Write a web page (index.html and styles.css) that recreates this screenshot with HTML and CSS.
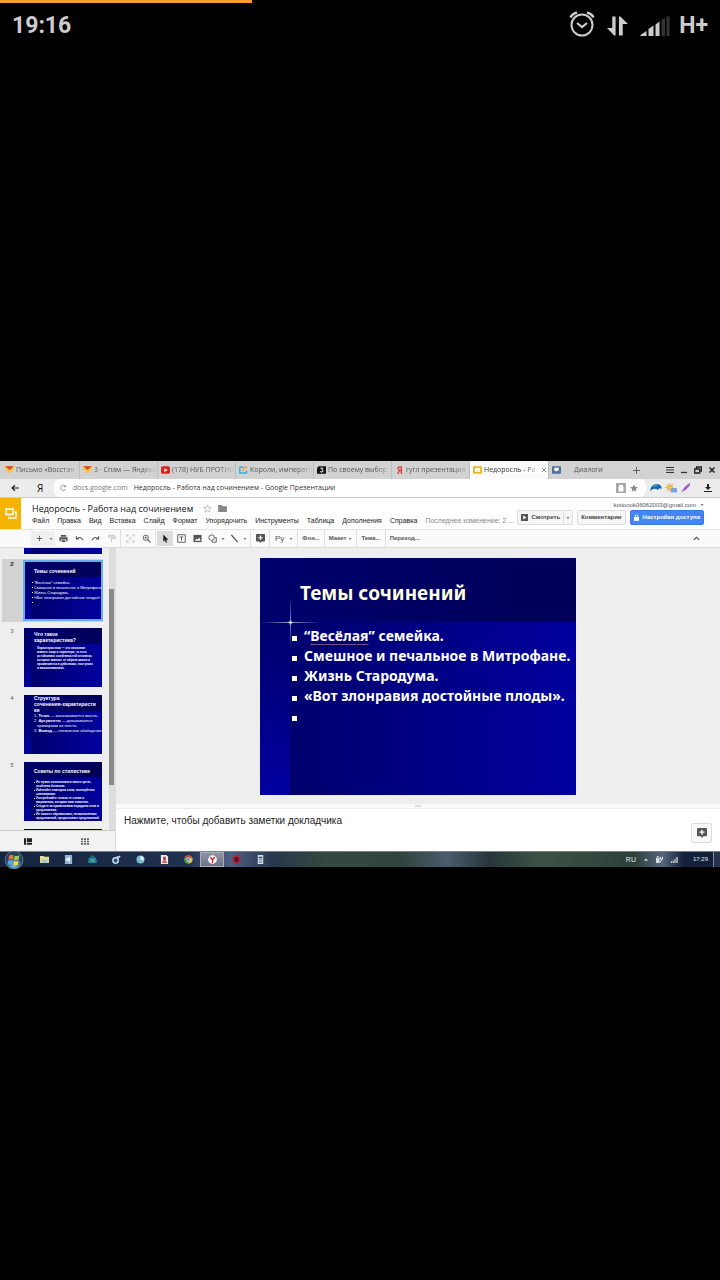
FILE: index.html
```html
<!DOCTYPE html>
<html lang="ru">
<head>
<meta charset="utf-8">
<meta name="viewport" content="width=device-width, initial-scale=1">
<title>Недоросль - Работа над сочинением</title>
<link rel="stylesheet" href="styles.css">
</head>
<body>
<svg class="defs" aria-hidden="true">
  <symbol id="i-mail" viewBox="0 0 12 10"><path fill="#f8c63d" d="M0 0h12v4L6 10 0 4z"/><path fill="#d9432f" d="M0 0h12L6 5z"/></symbol>
  <symbol id="i-caret" viewBox="0 0 6 4"><path fill="currentColor" d="M0 0h6L3 4z"/></symbol>
  <symbol id="i-comment" viewBox="0 0 12 12"><path fill="currentColor" d="M1 0h10q1 0 1 1v8q0 1-1 1H7.500L6 12 4.500 10H1Q0 10 0 9V1Q0 0 1 0z"/><path stroke="#fff" stroke-width="1.600" d="M6 2v6M3 5h6"/></symbol>
  <symbol id="i-signal" viewBox="0 0 29 20"><path fill="#ccc" d="M0 20v-1l6-4v5zM8 13l5-3.500V20H8zM15 8.500 19 5.500v14.500h-4z"/><path fill="#333" d="M21 4 24.500 2v18H21zM26 1 29 0v20h-3z"/></symbol>
</svg>

<div class="progress"><div class="progress-value"></div></div>
<header class="status">
  <time>19:16</time>
  <div class="status-icons">
    <svg class="alarm" viewBox="0 0 26 26" fill="none" stroke="#ccc" stroke-width="2"><circle cx="13" cy="14" r="10.500"/><path d="M8 12l5 4 5-4" stroke-width="2.200"/><path d="M1.500 6.500Q3 3 8 1.500M24.500 6.500Q23 3 18 1.500" stroke-width="2.400"/></svg>
    <svg class="transfer" viewBox="0 0 22 20" fill="#ccc"><path d="M5.500 0H9v20H7.500L0 12h5.500zM12.500 0H14l8 8h-5.500v12h-4z"/></svg>
    <svg class="signal"><use href="#i-signal"/></svg>
    <span class="net">H+</span>
  </div>
</header>

<main class="stage">
<section class="screen">
  <nav class="tabs">
    <a class="tab" href="#"><svg class="fav"><use href="#i-mail"/></svg><span>Письмо «Восстан</span></a>
    <a class="tab" href="#"><svg class="fav"><use href="#i-mail"/></svg><span>3 · Спам — Яндекс</span></a>
    <a class="tab" href="#"><svg class="fav" viewBox="0 0 12 10"><rect width="12" height="10" rx="2.500" fill="#d8201c"/><path fill="#fff" d="M4.500 2.500 9 5 4.500 7.500z"/></svg><span>(178) НУБ ПРОТИВ</span></a>
    <a class="tab" href="#"><svg class="fav" viewBox="0 0 12 10" fill="none"><path stroke="#35aee0" stroke-width="2" d="M6 1H2Q1 1 1 3v6h9V6"/><path stroke="#f29a2e" stroke-width="2" d="M5 6Q6 1 11 1.500"/></svg><span>Короли, императо</span></a>
    <a class="tab" href="#"><svg class="fav" viewBox="0 0 12 10"><path fill="#111" d="M2 0h10v10H0V3z"/><path fill="none" stroke="#fff" stroke-width="1.300" d="M4.500 2.500h3.500L6.500 4.500Q8.500 5 8 7 6 8.500 4 7"/></svg><span>По своему выбор</span></a>
    <a class="tab" href="#"><svg class="fav" viewBox="0 0 12 10"><path fill="none" stroke="#df3a32" stroke-width="1.800" d="M8.500 10V.800H6.500Q3.500 1 4 3.500 4.500 5.500 8 5.500M6 5.500 3.500 10"/></svg><span>гугл презентация -</span></a>
    <a class="tab active" href="#"><svg class="fav" viewBox="0 0 12 10"><rect width="12" height="10" rx="1.500" fill="#f2b51d"/><path fill="#fff" d="M2.500 2.500h7v5h-7z"/></svg><span>Недоросль - Ра</span><svg class="close" viewBox="0 0 6 6"><path stroke="#888" d="M1 1l4 4M5 1 1 5"/></svg></a>
    <a class="tab dialogs" href="#"><svg class="fav" viewBox="0 0 12 10"><rect width="12" height="10" rx="1" fill="#48709b"/><path fill="#fff" d="M3 2h6v4H6.500L5 8V6H3z"/></svg><span>Диалоги</span></a>
    <button class="new-tab" aria-label="Новая вкладка"><svg viewBox="0 0 8 8"><path stroke="#555" d="M4 0v8M0 4h8"/></svg></button>
    <div class="window-controls">
      <button aria-label="Меню"><svg viewBox="0 0 8 8"><path stroke="#333" stroke-width="1.200" d="M0 1.500h8M0 4h8M0 6.500h8"/></svg></button>
      <button aria-label="Свернуть"><svg viewBox="0 0 8 8"><path stroke="#333" stroke-width="1.300" d="M1 6.500h6"/></svg></button>
      <button aria-label="Окно"><svg viewBox="0 0 8 8" fill="none" stroke="#222" stroke-width="1.300"><path d="M2.500 2.500V1h5v4H6M.700 3h5v4h-5z"/></svg></button>
      <button aria-label="Закрыть"><svg viewBox="0 0 8 8"><path stroke="#222" stroke-width="1.500" d="M1.500 1.500l5 5M6.500 1.500l-5 5"/></svg></button>
    </div>
  </nav>

  <div class="address">
    <div class="nav-left">
      <button aria-label="Назад"><svg viewBox="0 0 8 8"><path fill="none" stroke="#222" stroke-width="1.200" d="M8 4H1M4 1.200 1 4l3 2.800"/></svg></button>
      <button class="ya">Я</button>
    </div>
    <div class="url">
      <button aria-label="Обновить"><svg viewBox="0 0 8 8"><path fill="none" stroke="#999" d="M6.500 2.500A2.600 2.600 0 1 0 6.600 5M6.800.800v2H4.500"/></svg></button>
      <span class="host">docs.google.com</span>
      <span>Недоросль - Работа над сочинением - Google Презентации</span>
      <span class="url-tools">
        <svg class="lock-box" viewBox="0 0 10 10"><path fill="#aaa" d="M0 0h10v10H0z"/><path fill="#fff" d="M3 4V2h4v2h.500v4.500h-5V4z"/></svg>
        <svg class="star" viewBox="0 0 10 10"><path fill="#888" d="M5 .500 6.400 3.700 10 4 7.200 6.300 8.100 9.800 5 7.900 1.900 9.800 2.800 6.300 0 4l3.600-.300z"/></svg>
      </span>
    </div>
    <div class="extensions">
      <svg viewBox="0 0 12 10"><path fill="#1565a8" d="M0 8Q1 1 7 1q4 0 5 5-3-2-4 1Q4 4 0 8z"/><path fill="#38a0dc" d="M2 4Q4 1 7 1l1 2z"/></svg>
      <svg viewBox="0 0 12 10"><circle cx="5" cy="4.500" r="2.500" fill="#f6c744" stroke="#e29b34"/><path stroke="#e29b34" d="M5 0v1M5 8v1M0 4.500h1.500M1.500 1l1 1M1.500 8l1-1M8.500 1l-1 1"/><path fill="#7aa7e0" d="M6 5h6v4.500H6z"/></svg>
      <svg viewBox="0 0 12 10"><path fill="#a558c4" d="M1 10Q4 3 10 0q1 3-6 8H3z"/></svg>
      <button aria-label="Загрузки"><svg viewBox="0 0 8 8"><path fill="#222" d="M3 0h2v3h2L4 6 1 3h2zM0 7h8v1H0z"/></svg></button>
    </div>
  </div>

  <div class="doc-header">
    <a class="logo" href="#" aria-label="Презентации"><svg viewBox="0 0 12 12" fill="none" stroke="#fff" stroke-width="1.500"><path d="M1 1h7v5.500H1z"/><path d="M4 8.500V10h7V4H9.500"/></svg></a>
    <div class="doc-info">
      <div class="title-row">
        <h1>Недоросль - Работа над сочинением</h1>
        <svg class="fav-star" viewBox="0 0 10 10"><path fill="none" stroke="#bbb" d="M5 1 6.200 3.900 9.300 4 6.900 6 7.700 9 5 7.300 2.300 9 3.100 6 .700 4l3.100-.100z"/></svg>
        <svg class="folder" viewBox="0 0 10 8"><path fill="#888" d="M0 0h4l1 1.300h5V8H0z"/></svg>
      </div>
      <nav class="menu">
        <a href="#">Файл</a><a href="#">Правка</a><a href="#">Вид</a><a href="#">Вставка</a><a href="#">Слайд</a><a href="#">Формат</a><a href="#">Упорядочить</a><a href="#">Инструменты</a><a href="#">Таблица</a><a href="#">Дополнения</a><a href="#">Справка</a><a class="edited" href="#">Последнее изменение: 2 ...</a>
      </nav>
    </div>
    <div class="account">
      <a class="email" href="#">kotionok06062003@gmail.com <svg class="caret"><use href="#i-caret"/></svg></a>
      <div class="actions">
        <div class="split">
          <button><svg class="play" viewBox="0 0 8 8"><path fill="#555" d="M0 0h8v8H0z"/><path fill="#fff" d="M2.500 1.800 6.300 4 2.500 6.200z"/></svg>Смотреть</button><button class="drop" aria-label="Ещё"><svg class="caret"><use href="#i-caret"/></svg></button>
        </div>
        <button class="comments">Комментарии</button>
        <button class="share"><svg class="lock" viewBox="0 0 6 8"><path fill="none" stroke="#fff" d="M1.500 4V2.200a1.500 1.500 0 0 1 3 0V4"/><path fill="#fff" d="M0 3.500h6V8H0z"/></svg>Настройки доступа</button>
      </div>
    </div>
  </div>

  <div class="toolbar">
    <div class="group">
      <button class="tool shade" aria-label="Новый слайд"><svg viewBox="0 0 10 10"><path stroke="#555" d="M5 2v6M2 5h6"/></svg></button>
      <button class="tool drop-tool shade" aria-label="Макет слайда"><svg class="caret"><use href="#i-caret"/></svg></button>
      <button class="tool" aria-label="Печать"><svg viewBox="0 0 10 10"><path fill="#555" d="M2 1h6v2H2zM.500 3.500h9V8H8V6H2v2H.500z"/><path fill="#555" d="M3 6.800h4V9H3z"/></svg></button>
      <button class="tool" aria-label="Отменить"><svg viewBox="0 0 10 10"><path fill="none" stroke="#555" stroke-width="1.200" d="M1.500 2.500v3h3M1.500 5.500Q6 1.500 9 7"/></svg></button>
      <button class="tool" aria-label="Повторить"><svg viewBox="0 0 10 10"><path fill="none" stroke="#555" stroke-width="1.200" d="M8.500 2.500v3h-3M8.500 5.500Q4 1.500 1 7"/></svg></button>
      <button class="tool" aria-label="Копировать формат"><svg viewBox="0 0 10 10"><path fill="none" stroke="#ccc" stroke-width="1.200" d="M2 1.500h5.500v2H2zM7.500 2.500H9v2.500H5V9"/></svg></button>
    </div>
    <div class="group">
      <button class="tool" aria-label="По размеру"><svg viewBox="0 0 10 10"><path fill="none" stroke="#bbb" d="M1 3V1h2M7 1h2v2M9 7v2H7M3 9H1V7M3.500 3.500 5 5l1.500-1.500M3.500 6.500 5 5l1.500 1.500"/></svg></button>
      <button class="tool" aria-label="Масштаб"><svg viewBox="0 0 10 10"><g fill="none" stroke="#555"><circle cx="4.200" cy="4.200" r="2.900"/><path stroke-width="1.300" d="M6.300 6.300 9.300 9.300"/><path stroke-width=".8" d="M4.200 2.800v2.800M2.800 4.200h2.800"/></g></svg></button>
    </div>
    <div class="group">
      <button class="tool picked" aria-label="Выбрать"><svg viewBox="0 0 10 10"><path fill="#222" d="M2.500.500v8L4.300 7l1.200 2.700 1.400-.600L5.700 6.400h2.600z"/></svg></button>
      <button class="tool" aria-label="Текстовое поле"><svg viewBox="0 0 10 10"><path fill="none" stroke="#555" d="M.800.800h8.400v8.400H.800zM3 3.300h4M5 3.300V7.500"/></svg></button>
      <button class="tool" aria-label="Изображение"><svg viewBox="0 0 10 10"><path fill="#555" d="M.500 1h9v8h-9z"/><path fill="#fff" d="M2 7.500 4 5l1.200 1.300L7 4l1.500 3.500z"/></svg></button>
      <button class="tool tight" aria-label="Фигура"><svg viewBox="0 0 10 10"><g fill="none" stroke="#555"><circle cx="4" cy="4" r="3"/><path d="M7.500 4h1.700v5H4.500V7.500"/></g></svg></button>
      <button class="tool drop-tool" aria-label="Фигуры"><svg class="caret"><use href="#i-caret"/></svg></button>
      <button class="tool tight" aria-label="Линия"><svg viewBox="0 0 10 10"><path stroke="#444" stroke-width="1.200" d="M1.500 1l7 8"/></svg></button>
      <button class="tool drop-tool" aria-label="Линии"><svg class="caret"><use href="#i-caret"/></svg></button>
    </div>
    <div class="group"><button class="tool" aria-label="Комментарий"><svg class="note-icon"><use href="#i-comment"/></svg></button></div>
    <div class="group text-group"><button class="input-tool">Ру</button><svg class="caret"><use href="#i-caret"/></svg></div>
    <div class="group text-group"><button>Фон...</button></div>
    <div class="group text-group"><button>Макет</button><svg class="caret"><use href="#i-caret"/></svg></div>
    <div class="group text-group"><button>Тема...</button></div>
    <div class="text-group"><button>Переход...</button></div>
    <button class="tool collapse" aria-label="Скрыть меню"><svg viewBox="0 0 10 10"><path fill="none" stroke="#444" stroke-width="1.200" d="M2 6.500 5 3.500l3 3"/></svg></button>
  </div>

  <div class="workspace">
    <aside class="side">
      <div class="strip-row">
        <ol class="strip">
          <li class="peek"><div class="thumb deck"></div></li>
          <li class="selected"><span class="num">2</span><div class="thumb deck"><h3>Темы сочинений</h3><ul class="mini-list"><li>“Весёлая” семейка.</li><li>Смешное и печальное в Митрофане.</li><li>Жизнь Стародума.</li><li>«Вот злонравия достойные плоды».</li><li></li></ul></div></li>
          <li><span class="num">3</span><div class="thumb deck high"><h3>Что такое<br>характеристика?</h3><p class="mini-text"><b>Характеристика</b> — это описание<br>живого лица и характера, то есть<br>устойчивых особенностей человека,<br>которые зависят от образа жизни и<br>проявляются в действиях, поступках<br>и высказываниях.</p></div></li>
          <li><span class="num">4</span><div class="thumb deck high structure"><h3>Структура<br>сочинения-характеристи<br>ки</h3><ol class="mini-steps"><li>1. <b>Тезис</b> — высказывается мысль.</li><li>2. <b>Аргументы</b> — доказывается<br>примерами из текста.</li><li>3. <b>Вывод</b> — логическое обобщение.</li></ol></div></li>
          <li><span class="num">5</span><div class="thumb deck advice"><h3>Советы по стилистике</h3><ul class="mini-list dense"><li>Не нужно использовать много цитат,<br>особенно больших.</li><li>Избегайте повторов слов, пользуйтесь<br>синонимами.</li><li>Употребляйте только те слова и<br>выражения, которые вам понятны.</li><li>Следите за правильным порядком слов в<br>предложении.</li><li>Не пишите обрывочных, незаконченных<br>предложений, придаточных предложений</li></ul></div></li>
          <li><span class="num">6</span><div class="thumb deck"></div></li>
        </ol>
        <div class="scroll"><div class="scroll-thumb"></div></div>
      </div>
      <div class="view-switch">
        <button aria-label="Лента"><svg viewBox="0 0 10 8"><path fill="#222" d="M0 0h2.500v8H0zM3.500 0H10v5H3.500zM3.500 6H10v2H3.500z"/></svg></button>
        <button aria-label="Сетка"><svg viewBox="0 0 10 8"><path fill="#666" d="M0 0h2.600v2H0zM3.700 0h2.600v2H3.700zM7.400 0H10v2H7.400zM0 3h2.600v2H0zM3.700 3h2.600v2H3.700zM7.400 3H10v2H7.400zM0 6h2.600v2H0zM3.700 6h2.600v2H3.700zM7.400 6H10v2H7.400z"/></svg></button>
      </div>
    </aside>
    <div class="editor">
      <div class="canvas">
        <article class="slide deck">
          <span class="flare"></span>
          <h2>Темы сочинений</h2>
          <ul>
            <li>“<span class="spell">Весёлая</span>” семейка.</li>
            <li>Смешное и печальное в Митрофане.</li>
            <li>Жизнь Стародума.</li>
            <li>«Вот злонравия достойные плоды».</li>
            <li></li>
          </ul>
        </article>
      </div>
      <div class="grip"><span></span></div>
      <div class="notes">
        <textarea aria-label="Заметки" placeholder="Нажмите, чтобы добавить заметки докладчика"></textarea>
        <button class="explore" aria-label="Анализ данных"><svg><use href="#i-comment"/></svg></button>
      </div>
    </div>
  </div>

  <footer class="taskbar">
    <button class="orb" aria-label="Пуск"><svg viewBox="0 0 20 18"><defs><radialGradient id="orb" cy=".8"><stop offset="0" stop-color="#6fc6ea"/><stop offset="1" stop-color="#23425f"/></radialGradient></defs><circle cx="10" cy="9" r="9" fill="url(#orb)" stroke="#7f94a8" stroke-width=".6"/><path fill="#f0713b" d="M5 5q2-2 4.500-.700L9 8.500Q7 7.500 4.500 8.700z"/><path fill="#9ccc4b" d="M10.500 4.500q2.500 1.200 5-.200L14.700 8.500q-2.500 1.200-4.700.200z"/><path fill="#57a8e8" d="M4.300 9.700q2.500-1.200 4.500 0l-.500 4q-2-1.200-4.500 0z"/><path fill="#fbd34c" d="M10 10q2.300 1 4.600-.200l-.700 4q-2.400 1.200-4.500.200z"/></svg></button>
    <button aria-label="Проводник"><svg viewBox="0 0 10 10"><path fill="#e9d98c" d="M0 1h4l1 1h5v7H0z"/><path fill="#9cc7cf" d="M2 5h6v4H2z"/></svg></button>
    <button aria-label="Звук"><svg viewBox="0 0 10 10"><path fill="#8fb6dc" d="M1 0h8v10H1z"/><path fill="#fff" d="M2 4h2l2.500-2v6L4 6H2z"/></svg></button>
    <button aria-label="Магазин"><svg viewBox="0 0 10 10"><path fill="#1d83a8" d="M1 3h8l1 6H0z"/><path fill="none" stroke="#36b2cc" d="M3 3q2-4 4 0"/><circle cx="5" cy="6" r="2" fill="#54a766"/></svg></button>
    <button aria-label="Плеер"><svg viewBox="0 0 10 10"><circle cx="4" cy="6" r="3" fill="#1d527e" stroke="#cbe5f3" stroke-width="1.600"/><path stroke="#cbe5f3" stroke-width="1.500" d="M5 2h4M7 3l2-2"/></svg></button>
    <button aria-label="Часы"><svg viewBox="0 0 10 10"><circle cx="5" cy="5" r="4.500" fill="#7fb9d4"/><path fill="#e9f5fa" d="M5 5V1a4 4 0 0 1 3.500 5z"/></svg></button>
    <button aria-label="Яндекс"><svg viewBox="0 0 10 10"><path fill="#efefef" d="M1 0h6l2 2v8H1z"/><path fill="#d2312f" d="M3.500 2h3v4h-3zM2.500 7h5v1.500h-5z"/></svg></button>
    <button aria-label="Chrome"><svg viewBox="0 0 10 10"><circle cx="5" cy="5" r="4.500" fill="#dfc243"/><path fill="#cf4638" d="M1 3a4.500 4.500 0 0 1 8 0L5 5z"/><path fill="#3f9950" d="M1 3a4.500 4.500 0 0 0 4 6.500V5z"/><circle cx="5" cy="5" r="2" fill="#4f8edc" stroke="#fff" stroke-width=".7"/></svg></button>
    <button class="running" aria-label="Яндекс.Браузер"><svg viewBox="0 0 10 10"><circle cx="5" cy="5" r="4.800" fill="#fff"/><path fill="none" stroke="#d8262b" stroke-width="1.600" d="M2.500 2 5 5.500 7.500 2M5 5v4"/></svg></button>
    <button aria-label="Opera"><svg viewBox="0 0 10 10"><ellipse cx="5" cy="5" rx="3.500" ry="4" fill="#4f1830" stroke="#c3202f" stroke-width="2"/></svg></button>
    <button aria-label="Калькулятор"><svg viewBox="0 0 10 10"><path fill="#d9e2ec" d="M2 0h6v10H2z"/><path fill="#34445c" d="M3 2h4v1.500H3zM3 5h4v.800H3zM3 7.500h4v.800H3z"/></svg></button>
    <div class="tray">
      <span class="lang">RU</span>
      <svg class="tray-up" viewBox="0 0 6 4"><path fill="#ddd" d="M0 4h6L3 0z"/></svg>
      <svg class="tray-icon" viewBox="0 0 8 8"><path fill="#ddd" d="M0 2h4v6H0zM1 0h2v1.500H1z"/><path fill="none" stroke="#fff" d="M5 1v2.500h2.500V1M6.200 3.500Q6.500 7 4 7"/></svg>
      <svg class="tray-icon" viewBox="0 0 8 8"><path fill="#ddd" d="M0 6h1.200v2H0zM2 5h1.200v3H2zM4 3h1.200v5H4zM6.200 1h1.400v7H6.200z"/></svg>
      <time>17:29</time>
    </div>
    <button class="desktop" aria-label="Показать рабочий стол"></button>
  </footer>
</section>
</main>
</body>
</html>
```

FILE: styles.css
```css
* { box-sizing: border-box; }
body {
  margin: 0;
  min-height: 100vh;
  display: flex;
  flex-direction: column;
  background: #000;
  font-family: "Liberation Sans", Arial, sans-serif;
}
button { margin: 0; padding: 0; border: 0; background: none; font: inherit; color: inherit; display: flex; align-items: center; justify-content: center; }
a { color: inherit; text-decoration: none; }
ul, ol { list-style: none; margin: 0; padding: 0; }
h1, h2, h3, p { margin: 0; }
svg { display: block; flex: none; }
.defs { position: absolute; width: 0; height: 0; }
.caret { width: 4px; height: 2px; color: #777; }

.progress { height: 3px; }
.progress-value { width: 35%; height: 3px; background: #f89d27; }
.status {
  height: 45px;
  padding: 0 12px;
  display: flex;
  align-items: center;
  justify-content: space-between;
  color: #ccc;
  font: 700 23px/44px Roboto, sans-serif;
}
.status-icons { display: flex; align-items: center; gap: 12px; }
.alarm { width: 26px; height: 26px; margin-bottom: 3px; }
.transfer { width: 21px; height: 20px; }
.signal { width: 30px; height: 20px; }
.net { margin-left: -3px; }

.stage { flex: 1; display: flex; flex-direction: column; justify-content: center; }
.screen { background: #fff; color: #333; }

.tabs { display: flex; height: 18px; padding-left: 2px; background: #d2d2d2; font: 7px/18px "Open Sans", sans-serif; color: #555; }
.tab { flex: 0 1 78px; min-width: 0; display: flex; align-items: center; gap: 2px; padding: 0 0 0 3px; border-right: 1px solid #bdbdbd; }
.tab span { flex: 1; overflow: hidden; white-space: nowrap; mask-image: linear-gradient(90deg, #000 75%, transparent); }
.fav { width: 9px; height: 8px; }
.tab.active { flex-basis: 79px; padding-right: 1px; background: #fbfbfb; color: #333; }
.close { width: 6px; height: 6px; }
.tab.dialogs { border-right: 0; gap: 13px; }
.dialogs span { mask-image: none; }
.new-tab { width: 18px; }
.new-tab svg { width: 7px; height: 7px; }
.window-controls { margin-left: auto; display: flex; gap: 6px; padding-right: 4px; }
.window-controls svg { width: 8px; height: 8px; }

.address { display: flex; height: 19px; background: #ececec; border-bottom: 1px solid #ccc; font: 7px/18px "Open Sans", sans-serif; color: #333; }
.nav-left { width: 54px; display: flex; align-items: center; gap: 18px; padding-left: 11px; }
.nav-left svg, .url button svg { width: 8px; height: 8px; }
.ya { font-size: 10px; color: #111; }
.url { flex: 1; min-width: 0; display: flex; align-items: center; gap: 6px; padding: 0 8px 0 5px; background: #fff; white-space: nowrap; border-radius: 6px; }
.host { color: #777; }
.url-tools { margin-left: auto; display: flex; align-items: center; gap: 4px; }
.lock-box { width: 10px; height: 10px; }
.star { width: 8px; height: 8px; }
.extensions { display: flex; align-items: center; gap: 3px; padding: 0 8px 0 4px; }
.extensions svg { width: 12px; height: 10px; }
.extensions button { margin-left: 9px; }
.extensions button svg { width: 8px; height: 8px; }

.doc-header { display: flex; height: 31px; background: #fff; }
.logo { width: 21px; display: flex; align-items: center; justify-content: center; background: #f4b400; }
.logo svg { width: 12px; height: 12px; }
.doc-info { flex: 1; min-width: 0; padding: 4px 0 0 11px; }
.title-row { display: flex; align-items: center; height: 13px; }
.title-row h1 { font: 400 9px/13px "Open Sans", sans-serif; color: #111; white-space: nowrap; }
.fav-star { width: 9px; height: 9px; margin-left: 10px; }
.folder { width: 9px; height: 7px; margin-left: 6px; }
.menu { display: flex; gap: 8px; font-size: 7px; line-height: 12px; color: #222; white-space: nowrap; }
.menu .edited { color: #888; }
.account { display: flex; flex-direction: column; align-items: flex-end; padding: 2px 16px 0 0; }
.email { display: flex; align-items: center; gap: 4px; font-size: 6px; line-height: 10px; color: #555; }
.actions { display: flex; gap: 4px; font-size: 6px; font-weight: 700; line-height: 13px; color: #444; white-space: nowrap; }
.split { display: flex; border: 1px solid #ddd; border-radius: 2px; background: #f6f6f6; }
.split button { padding: 0 3px; gap: 3px; }
.split .drop { width: 9px; padding: 0; border-left: 1px solid #ddd; }
.play { width: 7px; height: 7px; }
.comments { padding: 0 3px; border: 1px solid #ddd; border-radius: 2px; background: #f6f6f6; }
.share { padding: 0 3px; gap: 4px; border: 1px solid #3b78e7; border-radius: 2px; background: #4285f4; color: #fff; }
.lock { width: 5px; height: 7px; }

.toolbar { display: flex; align-items: center; height: 19px; padding-left: 30px; background: #fafafa; border-top: 1px solid #e4e4e4; border-bottom: 1px solid #ddd; color: #555; font: 700 6px/17px "Liberation Sans", Arial, sans-serif; }
.group { display: flex; align-items: center; height: 17px; border-right: 1px solid #e0e0e0; padding: 0 1px; }
.tool { width: 16px; height: 15px; }
.tool svg { width: 9px; height: 9px; }
.tool .caret { width: 4px; height: 2px; }
.tool.tight { width: 14px; }
.tool.drop-tool { width: 8px; }
.shade { background: #efefef; }
.picked { background: #dcdcdc; }
.text-group { display: flex; align-items: center; gap: 2px; padding: 0 4px; }
.input-tool { font-size: 8px; font-weight: 400; padding: 0 3px 0 1px; }
.collapse { margin: 0 16px 0 auto; }

.workspace { display: flex; background: #eee; }
.side { width: 116px; flex: none; display: flex; flex-direction: column; border-right: 1px solid #ddd; }
.strip-row { display: flex; flex: 1 1 0; min-height: 0; }
.strip { flex: 1; overflow: hidden; display: flex; flex-direction: column; gap: 4px; padding: 0 6px 0 2px; }
.strip > li { flex: none; display: flex; justify-content: space-between; padding: 2px 1px; }
.strip > .peek { padding: 0 1px; height: 6px; margin-bottom: 1px; overflow: hidden; justify-content: flex-end; align-items: flex-end; }
.strip > .selected { background: #d2d2d2; }
.num { width: 18px; font-size: 6px; line-height: 6px; text-align: center; color: #666; }
.selected .num { font-weight: 700; color: #222; }
.selected .thumb { outline: 2px solid #63b0ea; outline-offset: -1px; }
.scroll { width: 6px; padding-top: 41px; background: #ddd; }
.scroll-thumb { width: 5px; height: 196px; background: #8a8a8a; }
.view-switch { height: 21px; display: flex; align-items: center; gap: 49px; padding-left: 24px; border-top: 1px solid #ccc; background: #f2f2f2; }
.view-switch svg { width: 8px; height: 7px; }

.deck {
  color: #fff;
  font-family: "Noto Sans", sans-serif;
  font-weight: 700;
  background:
    linear-gradient(90deg, #00006c, #000058) 0 0 / 100% 27% no-repeat,
    linear-gradient(180deg, #00006c, #0000a0) 0 100% / 9.5% 73% no-repeat,
    linear-gradient(90deg, #000068, #00009e) 0 0 / 100% 100%;
}
.thumb { width: 78px; height: 59px; padding: 7px 0 0 10px; overflow: hidden; font: 700 3px/4px "Liberation Sans", Arial, sans-serif; white-space: nowrap; }
.thumb h3 { font-size: 5px; line-height: 6px; }
.thumb.high { padding-top: 3px; }
.thumb.structure { padding-top: 0; }
.mini-list { margin-top: 6px; font-size: 4px; line-height: 5px; font-weight: 400; }
.mini-list li { position: relative; min-height: 5px; }
.mini-list li::before { content: ""; position: absolute; left: -2px; top: 2px; width: 1px; height: 1px; background: #fff; }
.mini-text { margin-top: 3px; padding-left: 3px; }
.mini-steps { font-size: 4px; line-height: 5px; font-weight: 400; }
.mini-steps li { padding-left: 3px; text-indent: -3px; }
.thumb.advice { padding-top: 6px; }
.mini-list.dense { font-size: 3px; line-height: 4px; font-weight: 700; margin-top: 6px; padding-left: 2px; }

.editor { flex: 1; min-width: 0; }
.canvas { display: flex; justify-content: center; padding: 10px 0 9px; }
.slide { position: relative; width: 316px; max-width: 100%; min-height: 237px; padding: 20px 0 0 32px; }
.slide h2 { padding-left: 8px; font-size: 19px; line-height: 30px; color: #ffffdc; }
.slide ul { margin-top: 18px; font-size: 14px; line-height: 20px; white-space: nowrap; }
.slide li { display: flex; align-items: center; min-height: 20px; }
.slide li::before { content: ""; width: 5px; height: 5px; margin: 4px 7px 0 0; background: #fff; }
.spell { text-decoration: underline 1px #70508a; text-underline-offset: 3px; }
.flare {
  position: absolute;
  left: 0; top: 38px; width: 60px; height: 52px;
  background:
    radial-gradient(closest-side, #fff, transparent) 50% 50% / 5px 5px no-repeat,
    linear-gradient(90deg, transparent, #98a4d8, transparent) 0 50% / 100% 1px no-repeat,
    linear-gradient(180deg, transparent, #7888d0, transparent) 50% 0 / 1px 100% no-repeat;
}
.grip { height: 5px; display: flex; align-items: center; justify-content: center; background: #fafafa; border-bottom: 1px solid #eee; }
.grip span { width: 6px; height: 2px; background: #ddd; }
.notes { display: flex; align-items: flex-end; height: 42px; padding: 5px 8px 8px; background: #fff; }
.notes textarea { flex: 1; height: 29px; padding: 0; border: 0; resize: none; background: none; font: 10px/13px "Liberation Sans", Arial, sans-serif; }
.notes textarea::placeholder { color: #222; opacity: 1; }
.explore { width: 21px; height: 20px; border: 1px solid #ddd; border-radius: 2px; background: #f8f8f8; color: #555; }
.explore svg { width: 10px; height: 10px; }
.note-icon { color: #555; }

.taskbar {
  display: flex;
  height: 16px;
  padding-left: 4px;
  border-top: 1px solid #75818b;
  background: linear-gradient(90deg, #15233c 0, #203150 26%, #4e5f84 32%, #27374b 38%, #34483f 45%, #32443f 56%, #4c5b6c 62%, #27363a 68%, #3c5245 75%, #2d4038 88%, #54647a 92%, #14203a 95%, #14203a 100%);
  color: #e4e8ee;
}
.taskbar button { width: 24px; }
.taskbar button svg { width: 9px; height: 9px; }
.taskbar .orb { width: 20px; margin-right: 8px; }
.taskbar .orb svg { width: 20px; height: 18px; margin: -2px 0; }
.taskbar .running { border: 1px solid #a8adb8; background: linear-gradient(#8e94a4, #6b7387); }
.tray { margin-left: auto; display: flex; align-items: center; gap: 8px; font-size: 7px; line-height: 15px; }
.tray-up { width: 4px; height: 3px; }
.tray-icon { width: 7px; height: 7px; }
.tray time { margin: 0 5px 0 7px; font-size: 6px; }
.taskbar .desktop { width: 7px; border-left: 1px solid #7a869a; background: #27344c; }
```
